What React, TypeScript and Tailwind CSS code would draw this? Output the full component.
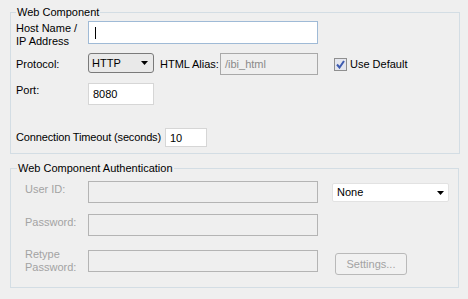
import React from 'react';

const Arrow: React.FC = () => (
  <svg width="7" height="4" viewBox="0 0 7 4" className="block">
    <path d="M0 0 H7 L3.5 4 Z" fill="#000" />
  </svg>
);

const CheckBox: React.FC = () => (
  <div className="w-[13px] h-[13px] border border-[#8f8f8f] bg-[#e4e6ee] flex items-center justify-center">
    <svg width="9" height="9" viewBox="0 0 9 9" className="block">
      <path d="M1 4.5 L3.5 7.5 L8 1" stroke="#3d5bb0" strokeWidth="2" fill="none" />
    </svg>
  </div>
);

const App: React.FC = () => {
  return (
    <div className="w-[468px] h-[299px] bg-[#efefef] font-['Liberation_Sans',Arial,sans-serif] text-[11px] leading-[13px] text-black pl-[10px] pt-[6px] overflow-hidden">
      {/* Web Component */}
      <fieldset className="w-[450px] h-[148px] border border-[#d3dde4] p-0 m-0">
        <legend className="ml-[5px] px-[1px]">Web Component</legend>
        <div className="flex flex-col pl-[5px] pt-[2px]">
          <div className="flex">
            <div className="w-[72px] h-[23px] pt-[1px]">
              Host Name /<br />IP Address
            </div>
            <div className="w-[230px] h-[23px] bg-white border border-[#9fbad6] flex items-center pl-[6px]">
              <div className="w-px h-[12px] bg-black" />
            </div>
          </div>

          <div className="flex items-center mt-[9px] h-[22px]">
            <div className="w-[72px]">Protocol:</div>
            <div className="w-[66px] h-[20px] self-start rounded-[3px] border border-[#7a7a7a] bg-[#e9e9e9] flex items-center justify-between pl-[3px] pr-[5px]">
              <span>HTTP</span>
              <Arrow />
            </div>
            <div className="w-[60px] ml-[6px] whitespace-nowrap">HTML Alias:</div>
            <div className="w-[98px] h-[22px] border border-[#a9a9a9] bg-[#efefef] text-[#8a8a8a] flex items-center pl-[4px]">
              /ibi_html
            </div>
            <div className="ml-[16px]">
              <CheckBox />
            </div>
            <div className="ml-[3px]">Use Default</div>
          </div>

          <div className="flex mt-[8px]">
            <div className="w-[72px] pt-[1px]">Port:</div>
            <div className="w-[66px] h-[22px] bg-white border border-[#d6d6d6] flex items-center pl-[4px]">
              8080
            </div>
          </div>

          <div className="flex items-center mt-[23px]">
            <div className="w-[149px] shrink-0 whitespace-nowrap tracking-[-0.15px]">Connection Timeout (seconds)</div>
            <div className="w-[42px] h-[19px] bg-white border border-[#d6d6d6] flex items-center pl-[4px] pt-[2px]">
              10
            </div>
          </div>
        </div>
      </fieldset>

      {/* Web Component Authentication */}
      <fieldset className="w-[449px] h-[126px] mt-[8px] border border-[#d3dde4] p-0 m-0">
        <legend className="ml-[6px] px-[1px]">Web Component Authentication</legend>
        <div className="flex flex-col pl-[5px] pt-[6px] text-[#a3a3a3]">
          <div className="flex">
            <div className="w-[72px] pl-[9px] pt-[2px]">User ID:</div>
            <div className="w-[230px] h-[22px] border border-[#b4b4b4] bg-[#efefef]" />
            <div className="w-[117px] h-[19px] ml-[14px] mt-[2px] rounded-[2px] bg-white border border-[#e2e2e2] text-black flex items-center justify-between pl-[4px] pr-[4px]">
              <span>None</span>
              <Arrow />
            </div>
          </div>

          <div className="flex mt-[11px]">
            <div className="w-[72px] pl-[9px] pt-[2px]">Password:</div>
            <div className="w-[230px] h-[22px] border border-[#b4b4b4] bg-[#efefef]" />
          </div>

          <div className="flex mt-[14px]">
            <div className="w-[72px] h-[22px] pl-[9px] -mt-[2px]">
              Retype<br />Password:
            </div>
            <div className="w-[230px] h-[22px] border border-[#b4b4b4] bg-[#efefef]" />
            <div className="w-[72px] h-[22px] ml-[17px] mt-[3px] rounded-[3px] border border-[#b9b9b9] bg-[#f1f1f1] flex items-center justify-center">
              Settings...
            </div>
          </div>
        </div>
      </fieldset>
    </div>
  );
};

export default App;
